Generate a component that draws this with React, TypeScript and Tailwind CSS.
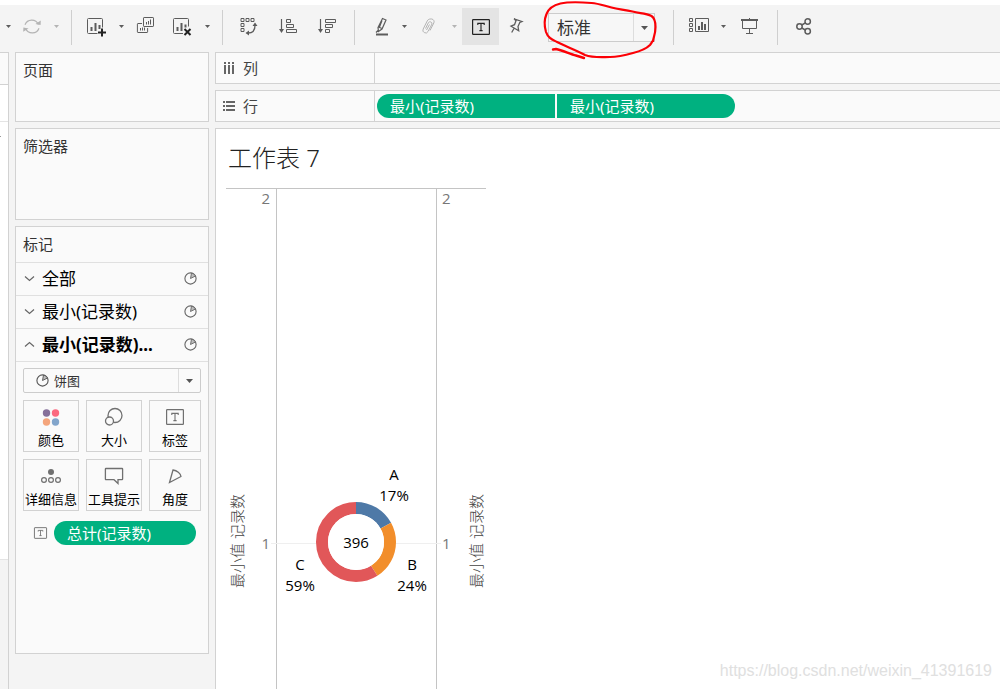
import { clsx } from "clsx";
import type { ReactNode } from "react";

interface ToolButtonProps {
	label: string;
	width?: string;
	active?: boolean;
	disabled?: boolean;
	children: ReactNode;
}

function ToolButton({
	label,
	width = "w-[34px]",
	active,
	disabled,
	children,
}: ToolButtonProps) {
	return (
		<button
			type="button"
			aria-label={label}
			title={label}
			disabled={disabled}
			className={clsx(
				"flex h-[37px] shrink-0 items-center justify-center",
				width,
				active && "bg-[#e4e4e4] text-[#222]",
				disabled && "text-[#b4b4b4]",
				!active && !disabled && "text-[#5c5c5c]",
			)}
		>
			{children}
		</button>
	);
}

function Caret() {
	return (
		<svg viewBox="0 0 7 4" className="h-1 w-[7px] fill-current" aria-hidden="true">
			<path d="M0 0h7L3.5 4z" />
		</svg>
	);
}

function MenuCaret({ label, disabled }: { label: string; disabled?: boolean }) {
	return (
		<ToolButton label={label} width="w-4" disabled={disabled}>
			<svg viewBox="0 0 5 3" className="h-[3px] w-[5px] fill-current" aria-hidden="true">
				<path d="M0 0h5L2.5 3z" />
			</svg>
		</ToolButton>
	);
}

function Separator() {
	return <div className="mx-[7px] mt-0.5 h-[35px] w-px shrink-0 bg-[#cfcfcf]" />;
}

function Icon({
	size = "h-5 w-5",
	box = "0 0 20 20",
	children,
}: {
	size?: string;
	box?: string;
	children: ReactNode;
}) {
	return (
		<svg
			viewBox={box}
			className={clsx("shrink-0 overflow-visible", size)}
			fill="none"
			stroke="currentColor"
			aria-hidden="true"
		>
			{children}
		</svg>
	);
}

function PieIcon() {
	return (
		<Icon size="h-[13px] w-[13px]" box="0 0 13 13">
			<circle cx="6.5" cy="6.5" r="5.6" strokeWidth="1.1" />
			<path d="M6.5 6.5L7.5 1a5.6 5.6 0 0 1 4 3z" fill="#bbb" strokeWidth="0.9" />
		</Icon>
	);
}

function TextBoxIcon({ size }: { size: string }) {
	return (
		<Icon size={size} box="0 0 18 16">
			<rect x="0.6" y="0.6" width="16.8" height="14.8" rx="0.6" strokeWidth="1.2" />
			<path d="M5.8 6V4.4h6.4V6M9 4.4v7.2M7.4 11.6h3.2" strokeWidth="1.1" />
		</Icon>
	);
}

function Toolbar() {
	return (
		<div className="flex h-[47px] shrink-0 items-start pt-[3px]" role="toolbar">
			<MenuCaret label="数据更新" />
			<ToolButton label="刷新" width="w-8" disabled>
				<Icon>
					<path d="M3 7.8A7.2 7.2 0 0 1 16.4 7.4M17 11.2A7.2 7.2 0 0 1 3.6 11.6" strokeWidth="1.2" />
					<path d="M13.4 7l5.2 1 .2-4.4zM6.6 11.4l-5.2-1-.2 4.4z" fill="currentColor" stroke="none" />
				</Icon>
			</ToolButton>
			<MenuCaret label="刷新选项" disabled />
			<Separator />
			<ToolButton label="新建工作表">
				<Icon>
					<path d="M11.5 16.5h-9a1 1 0 0 1-1-1v-13a1 1 0 0 1 1-1h13a1 1 0 0 1 1 1v8" />
					<path d="M5.5 10v4M9.5 6v8M13.5 8v4" strokeWidth="2" />
					<path d="M12 15.5h8M16 11.5v8" stroke="#222" strokeWidth="2" />
				</Icon>
			</ToolButton>
			<MenuCaret label="新建选项" />
			<ToolButton label="复制">
				<Icon>
					<rect x="7.5" y="0.5" width="10" height="9" rx="0.6" />
					<path d="M6 6.5H2a.6.6 0 0 0-.6.6v7.8a.6.6 0 0 0 .6.6h9a.6.6 0 0 0 .6-.6V11" />
					<path d="M10.5 5v2.5M12.5 4v3.5M14.5 2.5v5M4.5 11v2.5M6.5 10.5v3M8.5 10.5v3" />
				</Icon>
			</ToolButton>
			<ToolButton label="清除工作表" width="w-[36px]">
				<Icon>
					<path d="M12 16.5H3.5a1 1 0 0 1-1-1v-13a1 1 0 0 1 1-1h13a1 1 0 0 1 1 1v7" />
					<path d="M6.5 10v4M10.5 6v8M14.5 7.5v3" strokeWidth="2" />
					<path d="M13.5 12l6 6M19.5 12l-6 6" stroke="#222" strokeWidth="2" />
				</Icon>
			</ToolButton>
			<MenuCaret label="清除选项" />
			<Separator />
			<ToolButton label="交换行和列" width="w-[39px]">
				<Icon>
					<path d="M1 1.5h3v3H1zM6 1.5h3v3H6zM11 1.5h3v3h-3zM1 6.5h3v3H1zM1 11.5h3v3H1z" />
					<path d="M8 16c5 0 7-3 7-7.5" strokeWidth="1.3" />
					<path d="M12.5 9L15 5.500 17.500 9zM9 13.500L5.500 16 9 18.500z" fill="currentColor" stroke="none" />
				</Icon>
			</ToolButton>
			<ToolButton label="升序排序" width="w-[39px]">
				<Icon>
					<path d="M2.5 2v11" strokeWidth="1.2" />
					<path d="M0 12h5l-2.5 4z" fill="currentColor" stroke="none" />
					<path d="M7.5 2.5h4v3h-4zM7.5 7.5h7v3h-7zM7.5 12.5h10v3h-10z" />
				</Icon>
			</ToolButton>
			<ToolButton label="降序排序" width="w-[39px]">
				<Icon>
					<path d="M2.5 2v11" strokeWidth="1.2" />
					<path d="M0 12h5l-2.5 4z" fill="currentColor" stroke="none" />
					<path d="M7.5 2.5h10v3h-10zM7.5 7.5h7v3h-7zM7.5 12.5h4v3h-4z" />
				</Icon>
			</ToolButton>
			<Separator />
			<ToolButton label="突出显示">
				<Icon>
					<path d="M13.5 1.5l3.5 1.5-4 9-3.5 2.500-.5-4zM9.5 10l3.5 1.5M13 3.5L10.5 10M7 15.5l2-2" strokeWidth="1.2" />
					<path d="M7 17.5h12" strokeWidth="2" />
				</Icon>
			</ToolButton>
			<MenuCaret label="突出显示选项" />
			<ToolButton label="组" disabled>
				<Icon>
					<path d="M6.5 11.5l3-6a2 2 0 0 1 3.5 1.5l-4 7.5a2.7 2.7 0 0 1-4.800-2.500l4-8a3.500 3.500 0 0 1 2.600-2h2a2.800 2.800 0 0 1 2 4L11 13.500M10.500 7.500l-3 5.500" />
				</Icon>
			</ToolButton>
			<MenuCaret label="组选项" disabled />
			<ToolButton label="显示标记标签" width="w-[37px]" active>
				<TextBoxIcon size="h-4 w-[18px]" />
			</ToolButton>
			<ToolButton label="固定轴">
				<Icon>
					<path d="M8 1.800l8 2.700-2.200 1-1.800 4 .7 4.200-7.700-4.500 3.500-1.500L10 3.700zM8 11.500l-2.300 4" strokeWidth="1.3" />
				</Icon>
			</ToolButton>

			<div className="relative ml-[15px] mr-[11px] mt-[5px] h-[29px] w-[107px] shrink-0 border border-[#ccc] bg-[#f7f7f7]">
				<select
					aria-label="适合"
					className="h-full w-full appearance-none pl-2 text-[17px] text-[#333] outline-none"
				>
					<option>标准</option>
				</select>
				<span className="pointer-events-none absolute inset-y-0 right-0 flex w-[21px] items-center justify-center border-l border-[#ddd] text-[#555]">
					<Caret />
				</span>
				{/* Hand-drawn mark around the fit selector */}
				<svg
					viewBox="0 0 120 62"
					className="pointer-events-none absolute -left-[9px] -top-[14px] z-10 h-[62px] w-[120px] max-w-none"
					fill="none"
					stroke="#fb0006"
					strokeWidth="2.2"
					strokeLinecap="round"
					aria-hidden="true"
				>
					<path d="M113 41c.5-4 2.500-7 2.500-14 0-6-1-9-4-11-6-3-12-2.500-19-4.500-8-2-14-2-21-4-8-2-13-4-20-4.500-12-1-22-1.500-31 .5C12 5.500 8 10 6.500 14 4 20 4.500 27 6 32c2 6 6 7.500 11 10 9 4.500 19 8 28 13 8 3 17 2 25 2 9 0 16-2 23-4 8-2 14-5 17-8 3-4 2-4 3-4z" />
					<path d="M13 49.500l3-.5c6 1 14 5 20 6.500l8 2.500" strokeWidth="2.400" />
				</svg>
			</div>

			<Separator />
			<ToolButton label="显示卡">
				<Icon>
					<path d="M1.5 1.5h3v3h-3zM1.5 6.5h3v3h-3zM1.5 11.5h3v3h-3zM7.5 1.5h13v13h-13z" />
					<path d="M11 9v4M14 5v8M17 7v6" strokeWidth="2" />
				</Icon>
			</ToolButton>
			<MenuCaret label="显示卡选项" />
			<ToolButton label="演示模式" width="w-[39px]">
				<Icon>
					<path d="M1.5 3.5v8h14v-8M8.5 12v5M5 16.5h7M8.5 1v2" />
					<path d="M0 3h17" strokeWidth="2" />
				</Icon>
			</ToolButton>
			<Separator />
			<ToolButton label="共享" width="w-[38px]">
				<Icon>
					<g strokeWidth="1.5">
						<circle cx="5.5" cy="9.5" r="2.7" />
						<circle cx="13.7" cy="4.5" r="2.7" />
						<circle cx="13.7" cy="14.3" r="2.7" />
						<path d="M7.8 8l3.6-2.2M7.8 11l3.6 2" />
					</g>
				</Icon>
			</ToolButton>
		</div>
	);
}

function Pill({ className, children }: { className?: string; children: ReactNode }) {
	return (
		<button
			type="button"
			className={clsx(
				"h-6 bg-[#00b180] px-[13px] text-left text-[15px] leading-6 text-white",
				className,
			)}
		>
			{children}
		</button>
	);
}

function MarkLayer({ name, open }: { name: string; open?: boolean }) {
	return (
		<button
			type="button"
			aria-expanded={!!open}
			className="flex h-[33px] w-full items-center border-b border-[#e0e0e0] pb-px pl-[9px] pr-[11px] text-[#666]"
		>
			<Icon size="h-[9px] w-[9px]" box="0 0 9 9">
				<path d={open ? "M0 6.5l4.5-4 4.5 4" : "M0 2.5l4.5 4 4.5-4"} strokeWidth="1.2" />
			</Icon>
			<span
				className={clsx(
					"ml-2 flex-1 text-left text-[17px] leading-6 text-black",
					open && "font-bold",
				)}
			>
				{name}
			</span>
			<PieIcon />
		</button>
	);
}

const markButtons = [
	{
		name: "颜色",
		icon: (
			<Icon>
				<g stroke="none">
					<circle cx="5.5" cy="6" r="3.7" fill="#86709a" />
					<circle cx="14.5" cy="6" r="3.7" fill="#fb6a80" />
					<circle cx="5.5" cy="15" r="3.7" fill="#f4a57c" />
					<circle cx="14.5" cy="15" r="3.7" fill="#82a5cb" />
				</g>
			</Icon>
		),
	},
	{
		name: "大小",
		icon: (
			<Icon>
				<circle cx="11" cy="8.5" r="7" strokeWidth="1.3" />
				<circle cx="5.5" cy="14" r="4" fill="#fafafa" strokeWidth="1.3" />
			</Icon>
		),
	},
	{ name: "标签", icon: <TextBoxIcon size="h-5 w-[18px]" /> },
	{
		name: "详细信息",
		icon: (
			<Icon>
				<circle cx="10" cy="6" r="3" fill="currentColor" stroke="none" />
				<circle cx="3" cy="14" r="2.4" strokeWidth="1.2" />
				<circle cx="10" cy="14" r="2.4" strokeWidth="1.2" />
				<circle cx="17" cy="14" r="2.4" strokeWidth="1.2" />
			</Icon>
		),
	},
	{
		name: "工具提示",
		icon: (
			<Icon>
				<path d="M2 2.5h16a.6.6 0 0 1 .6.6v10a.6.6 0 0 1-.6.6h-4v3.8l-4-3.8H2a.6.6 0 0 1-.6-.6v-10A.6.6 0 0 1 2 2.5z" strokeWidth="1.3" />
			</Icon>
		),
	},
	{
		name: "角度",
		icon: (
			<Icon>
				<path d="M4.5 16.5L8 4c4 .5 7.500 3.500 8 6.500z" strokeWidth="1.3" />
			</Icon>
		),
	},
];

function SideCards() {
	return (
		<aside className="flex w-[194px] shrink-0 flex-col gap-1.5 text-[15px] text-[#333]">
			<section className="h-[70px] border border-[#d2d2d2] bg-[#fafafa] px-[7px] py-[5px]">
				<h2 className="leading-6">页面</h2>
			</section>
			<section className="h-[92px] border border-[#d2d2d2] bg-[#fafafa] px-[7px] py-[5px]">
				<h2 className="leading-6">筛选器</h2>
			</section>
			<section className="min-h-[428px] border border-[#d2d2d2] bg-[#fafafa]">
				<h2 className="border-b border-[#e0e0e0] px-[7px] pb-1.5 pt-[5px] leading-6">
					标记
				</h2>
				<MarkLayer name="全部" />
				<MarkLayer name="最小(记录数)" />
				<MarkLayer name="最小(记录数)..." open />

				<div className="px-[7px] pt-1.5">
					<div className="relative h-[25px] rounded-xs border border-[#ccc] text-[#555]">
						<span className="pointer-events-none absolute inset-y-0 left-3 flex items-center">
							<PieIcon />
						</span>
						<select
							aria-label="标记类型"
							className="h-full w-full appearance-none pb-px pl-[30px] text-[13px] text-[#333] outline-none"
						>
							<option>饼图</option>
						</select>
						<span className="pointer-events-none absolute inset-y-0 right-0 flex w-[22px] items-center justify-center border-l border-[#ddd]">
							<Caret />
						</span>
					</div>

					<div className="mt-[7px] grid grid-cols-[56fr_56fr_52fr] gap-[7px]">
						{markButtons.map((b) => (
							<button
								key={b.name}
								type="button"
								className="flex h-[52px] flex-col items-center border border-[#d2d2d2] pt-1.5 text-[#707070]"
							>
								{b.icon}
								<span className="mt-[3px] whitespace-nowrap text-[13px] leading-5 text-black">
									{b.name}
								</span>
							</button>
						))}
					</div>

					<div className="mt-[10px] flex items-center gap-[7px] pl-[11px] pr-[5px] text-[#666]">
						<TextBoxIcon size="h-3 w-[13px]" />
						<Pill className="flex-1 rounded-full">总计(记录数)</Pill>
					</div>
				</div>
			</section>
		</aside>
	);
}

function Shelf({
	name,
	icon,
	children,
}: {
	name: string;
	icon: ReactNode;
	children?: ReactNode;
}) {
	return (
		<div className="flex h-8 shrink-0 border-y border-l border-[#d2d2d2] bg-[#fafafa]">
			<div className="flex w-[159px] shrink-0 items-center gap-2 border-r border-[#d2d2d2] pl-[7px] text-[15px] text-[#444]">
				{icon}
				{name}
			</div>
			<div className="flex items-center gap-0.5 pl-0.5">{children}</div>
		</div>
	);
}

const slices = [
	{ name: "A", share: 17, color: "#4e79a7", x: 168, y: 292 },
	{ name: "B", share: 24, color: "#f28e2b", x: 186, y: 382 },
	{ name: "C", share: 59, color: "#e15759", x: 74, y: 382 },
];

function DonutChart() {
	let start = 0;
	const arcs = slices.map((s) => {
		const arc = { ...s, start };
		start += s.share;
		return arc;
	});

	return (
		<svg
			viewBox="0 0 260 501"
			className="block h-[501px] w-[260px]"
			fontSize="15"
			role="img"
			aria-label="记录数"
		>
			<path d="M0 .5h260M50.5 0v501M210.5 0v501" stroke="#c4c4c4" />
			<path d="M45 355.5h170" stroke="#efefef" />
			{/* ring of 12 around r = 34, first slice starts at 12 o'clock */}
			<g transform="rotate(-90 130 354)" fill="none" strokeWidth="12">
				{arcs.map((a) => (
					<circle
						key={a.name}
						cx="130"
						cy="354"
						r="34"
						pathLength={100}
						stroke={a.color}
						strokeDasharray={`${a.share} ${100 - a.share}`}
						strokeDashoffset={-a.start}
					/>
				))}
			</g>
			<circle cx="130" cy="354" r="28" fill="#fff" />
			<g fill="#000" textAnchor="middle" fontFamily="'Open Sans', 'Noto Sans', sans-serif">
				<text x="130" y="360">
					396
				</text>
				{arcs.map((a) => (
					<text key={a.name} x={a.x} y={a.y}>
						{a.name}
						<tspan x={a.x} dy="21">
							{a.share}%
						</tspan>
					</text>
				))}
			</g>
			<g fill="#777" fontFamily="'Open Sans', 'Noto Sans', sans-serif">
				<text x="44" y="16" textAnchor="end">
					2
				</text>
				<text x="44" y="361" textAnchor="end">
					1
				</text>
				<text x="216" y="16">
					2
				</text>
				<text x="216" y="361">
					1
				</text>
			</g>
			<g fill="#444" textAnchor="middle" fontWeight="300">
				<text transform="translate(17 353) rotate(-90)">最小值 记录数</text>
				<text transform="translate(256 353) rotate(-90)">最小值 记录数</text>
			</g>
		</svg>
	);
}

export default function App() {
	return (
		<div className="relative flex min-h-screen flex-col overflow-hidden bg-[#f4f4f4] font-['Noto_Sans','Noto_Sans_CJK_SC',sans-serif]">
			<div className="h-[5px] shrink-0 bg-white" />
			<Toolbar />
			<div className="flex flex-1">
				{/* Edge of the collapsed data pane */}
				<div className="mr-1.5 flex w-[9px] shrink-0 flex-col border-r border-t border-[#d2d2d2]">
					<div className="h-8 border-b border-[#d2d2d2] bg-[#fafafa]" />
					<div className="h-[37px] border-b border-[#e4e4e4] bg-white" />
					<div className="h-[438px] border-b border-[#e4e4e4] bg-white pt-[14px]">
						<div className="h-px w-px bg-[#999]" />
					</div>
				</div>
				<SideCards />
				<main className="ml-1.5 flex min-w-0 flex-1 flex-col gap-1.5">
					<Shelf
						name="列"
						icon={
							<Icon size="h-3 w-3" box="0 0 12 12">
								<path
									d="M2 0v2M6 0v2M10 0v2M2 3v9M6 3v9M10 3v9"
									stroke="#666"
									strokeWidth="2"
								/>
							</Icon>
						}
					/>
					<Shelf
						name="行"
						icon={
							<Icon size="h-3 w-3" box="0 0 12 12">
								<path
									d="M0 2h2M0 6h2M0 10h2M3 2h9M3 6h9M3 10h9"
									stroke="#666"
									strokeWidth="2"
								/>
							</Icon>
						}
					>
						<Pill className="w-[178px] rounded-l-full">最小(记录数)</Pill>
						<Pill className="w-[178px] rounded-r-full">最小(记录数)</Pill>
					</Shelf>
					<section className="flex-1 border-l border-t border-[#d2d2d2] bg-white pl-[10px]">
						<h1 className="pb-0.5 pl-0.5 text-2xl font-light leading-[57px] text-[#222]">
							工作表 7
						</h1>
						<DonutChart />
					</section>
				</main>
			</div>
			<p className="pointer-events-none absolute bottom-1.5 right-2 font-['Liberation_Sans',sans-serif] text-base text-[#e0e0e0]">
				https://blog.csdn.net/weixin_41391619
			</p>
		</div>
	);
}
